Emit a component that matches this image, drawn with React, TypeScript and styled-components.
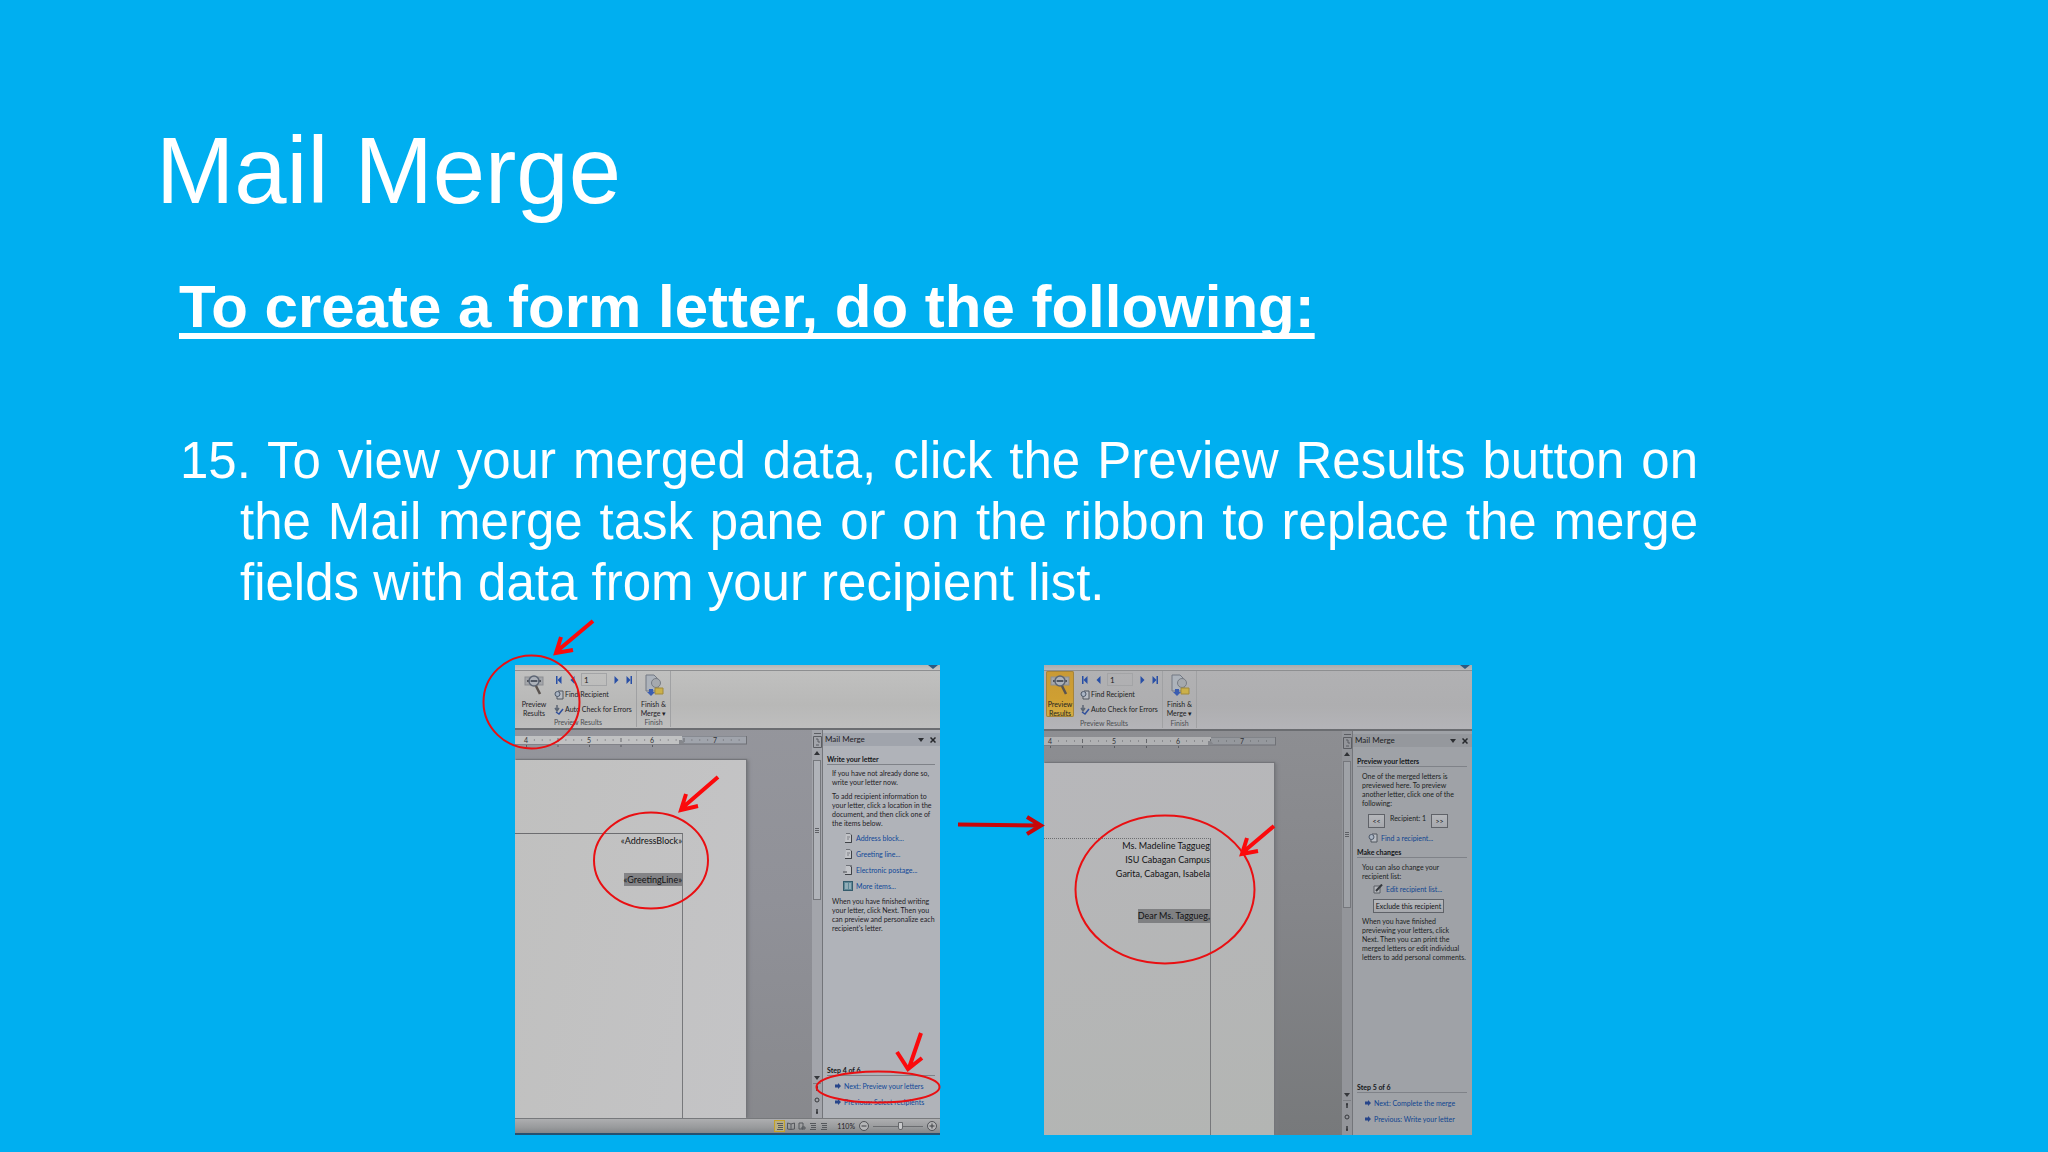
import React from "react";
import styled, { createGlobalStyle, css } from "styled-components";

const Global = createGlobalStyle`
  * { box-sizing: border-box; }
  body { margin: 0; background: #00aff0; }
  h1, h2, h3, p { margin: 0; }
`;

const paneFont = `Lato, "Open Sans", sans-serif`;

type Tone = {
  strip: string; ribbon: string; desk: string; paper: string; pane: string; head: string;
  text: string; link: string; mark: string; track: string;
};

const lightTone: Tone = {
  strip: "linear-gradient(#b4b6b5, #c6c6c6)",
  ribbon: "linear-gradient(#c0c0bf, #b8b8b7 60%, #bebebe)",
  desk: "linear-gradient(#96979d, #909198 50%, #87888c)",
  paper: "linear-gradient(100deg, #c0c0bf, #c4c4c6)",
  pane: "#b0b3b9", head: "#a0a4ac", text: "#1f2126", link: "#0f4798", mark: "#838386", track: "#a3a5ab",
};

const darkTone: Tone = {
  strip: "linear-gradient(#a9abac, #b9b9ba)",
  ribbon: "linear-gradient(#b1b1b3, #aeaeb0 60%, #b4b4b8)",
  desk: "linear-gradient(#909195, #85868a 50%, #77797b)",
  paper: "linear-gradient(170deg, #b7b7ba, #b3b5b3)",
  pane: "#9fa2a7", head: "#95989d", text: "#1c1e22", link: "#0f4490", mark: "#7f8082", track: "#93959a",
};

const Slide = styled.main`
  min-height: 100vh;
  padding: 115px 0 17px;
  background: #00aff0;
  color: #fff;
  font-family: "Liberation Sans", Arial, sans-serif;
`;
const Title = styled.h1`
  padding: 0 156px;
  font-size: 94px;
  line-height: 112px;
  font-weight: 400;
`;
const Heading = styled.h2`
  padding: 44px 179px 0;
  font-size: 60px;
  line-height: 72px;
  font-weight: 700;
  text-decoration: underline;
  text-decoration-thickness: 6px;
  text-underline-offset: 6px;
  text-decoration-skip-ink: none;
`;
const Step = styled.p`
  padding: 87px 350px 0 240px;
  font-size: 51px;
  line-height: 61px;
  text-indent: -60px;
  text-align: justify;
`;
const Figures = styled.section`
  position: relative;
  display: flex;
  gap: 104px;
  width: fit-content;
  margin: 52px 0 0 515px;
`;
const Marks = styled.svg`
  position: absolute;
  inset: 0;
  overflow: visible;
  pointer-events: none;
`;

const Window = styled.article<{ $tone: Tone; $width: number }>`
  display: flex;
  flex-direction: column;
  width: ${p => p.$width}px;
  height: 470px;
  overflow: hidden;
  color: ${p => p.$tone.text};
  background: ${p => p.$tone.desk};
  font-family: ${paneFont};
  font-size: 7px;
  line-height: 9px;
  white-space: nowrap;
`;
const Strip = styled.div<{ $tone: Tone }>`
  display: flex;
  justify-content: flex-end;
  height: 6px;
  padding-right: 2px;
  background: ${p => p.$tone.strip};
  border-bottom: 1px solid #8d8e90;
`;
const Ribbon = styled.div<{ $tone: Tone; $inset: number; $height: number }>`
  display: flex;
  height: ${p => p.$height}px;
  padding-left: ${p => p.$inset}px;
  background: ${p => p.$tone.ribbon};
  border-bottom: 2px solid #6b6d71;
`;
const Group = styled.div<{ $width: number }>`
  display: flex;
  flex-direction: column;
  width: ${p => p.$width}px;
  margin: 0 0 1px;
  border-right: 1px solid #a0a1a3;
`;
const GroupBody = styled.div<{ $center?: boolean }>`
  display: flex;
  flex: 1;
  gap: 6px;
  justify-content: ${p => (p.$center ? "center" : "flex-start")};
`;
const GroupLabel = styled.div`
  color: #4c4e52;
  text-align: center;
`;
const plainButton = css`
  margin: 0;
  padding: 0;
  border: 0;
  background: none;
  color: inherit;
  font: inherit;
`;
const BigButton = styled.button<{ $active?: boolean }>`
  ${plainButton}
  display: flex;
  flex-direction: column;
  align-items: center;
  width: 28px;
  height: 46px;
  padding-top: 3px;
  ${p => p.$active && css`
    background: linear-gradient(#c99a35, #cf9f32 60%, #d6ae44);
    box-shadow: inset 0 0 0 1px #a5843a;
    border-radius: 2px;
  `}
  svg { margin-bottom: 4px; flex: none; }
`;
const Tools = styled.div`
  display: flex;
  flex-direction: column;
  padding-top: 1px;
`;
const NavRow = styled.div`
  display: flex;
  align-items: center;
  justify-content: space-between;
  width: 78px;
  height: 15px;
  padding-left: 2px;
`;
const NavButton = styled.button`
  ${plainButton}
  display: flex;
`;
const RecordBox = styled.input`
  width: 26px;
  height: 13px;
  padding: 0 2px;
  border: 1px solid #a3a4a6;
  background: transparent;
  color: #222;
  font: 8px ${paneFont};
`;
const ToolButton = styled.button`
  ${plainButton}
  display: flex;
  align-items: center;
  gap: 1px;
  height: 15px;
`;

const Work = styled.div`
  display: flex;
  flex: 1;
  min-height: 0;
`;
const Desk = styled.div`
  flex: 1;
  display: flex;
  flex-direction: column;
  min-width: 0;
  padding-top: 6px;
`;
const RulerArt = styled.svg<{ $gap: number }>`
  flex: none;
  margin-bottom: ${p => p.$gap}px;
`;
const Paper = styled.div<{ $tone: Tone; $top: number; $width: number }>`
  flex: 1;
  width: ${p => p.$width}px;
  padding: ${p => p.$top}px 63px 0 0;
  background: ${p => p.$tone.paper};
  box-shadow: 1px -1px 1px #74757a, 3px 0 3px #7b7c80;
`;
const TextArea = styled.div<{ $line: number; $dotted?: boolean }>`
  height: 100%;
  border-top: 1px ${p => (p.$dotted ? "dotted" : "solid")} #6c6d70;
  border-right: 1px solid #77787b;
  color: #121214;
  font-family: Lato, sans-serif;
  font-size: 9px;
  line-height: ${p => p.$line}px;
  text-align: right;
`;
const DocLine = styled.p`
  min-height: 1lh;
`;
const Field = styled.mark<{ $tone: Tone }>`
  display: inline-block;
  background: ${p => p.$tone.mark};
  color: inherit;
`;

const Scroll = styled.div<{ $tone: Tone }>`
  display: flex;
  flex-direction: column;
  align-items: center;
  width: 10px;
  padding-top: 3px;
  background: ${p => p.$tone.track};
  svg { flex: none; }
`;
const Thumb = styled.div<{ $tone: Tone; $height: number }>`
  display: grid;
  place-items: center;
  width: 8px;
  height: ${p => p.$height}px;
  margin-bottom: auto;
  background: ${p => p.$tone.pane};
  border: 1px solid #75777c;
`;

const Pane = styled.aside<{ $tone: Tone; $width: number }>`
  display: flex;
  flex-direction: column;
  width: ${p => p.$width}px;
  padding-top: 3px;
  background: ${p => p.$tone.pane};
  border-left: 1px solid #73757a;
`;
const PaneHead = styled.header<{ $tone: Tone }>`
  display: flex;
  align-items: center;
  height: 13px;
  padding: 0 4px 0 2px;
  gap: 6px;
  background: ${p => p.$tone.head};
  font-size: 8px;
  span { flex: 1; }
`;
const Section = styled.h3<{ $gap: number }>`
  height: 10px;
  margin: ${p => p.$gap}px 5px 0 4px;
  border-bottom: 1px solid #7f8288;
  color: #15171a;
  font-size: 7px;
  line-height: 9px;
  font-weight: 700;
`;
const Para = styled.p<{ $gap: number }>`
  margin: ${p => p.$gap}px 0 0 9px;
`;
const LinkRow = styled.div<{ $indent: number }>`
  display: flex;
  align-items: center;
  gap: 3px;
  height: 16px;
  padding-left: ${p => p.$indent}px;
`;
const Link = styled.a<{ $tone: Tone }>`
  color: ${p => p.$tone.link};
  text-decoration: none;
`;
const Items = styled.div`
  padding: 2px 0 0;
`;
const RecipientRow = styled.div`
  display: flex;
  gap: 5px;
  padding: 6px 0 2px 15px;
`;
const RecipientName = styled.span`
  width: 36px;
  text-align: center;
`;
const PushButton = styled.button<{ $width: number }>`
  width: ${p => p.$width}px;
  height: 14px;
  padding: 0;
  border: 1px solid #5f6268;
  background: linear-gradient(#b5b7bb, #a6a8ad);
  color: #121417;
  font: 7px ${paneFont};
`;
const ExcludeRow = styled.div`
  padding: 2px 0 0 20px;
  line-height: 0;
`;
const StepFoot = styled.footer`
  margin-top: auto;
  padding-bottom: 8px;
`;

const Status = styled.div`
  display: flex;
  align-items: center;
  justify-content: flex-end;
  gap: 4px;
  height: 17px;
  padding-right: 3px;
  background: linear-gradient(#adaeb0, #989a9c 60%, #858789);
  border-top: 1px solid #77797c;
  border-bottom: 2px solid #27506f;
`;
const ViewButton = styled.button<{ $active?: boolean }>`
  ${plainButton}
  display: grid;
  place-items: center;
  width: 11px;
  height: 12px;
  margin-right: -4px;
  ${p => p.$active && css`
    border: 1px solid #c4a228;
    background: #b8ae84;
  `}
`;
const Percent = styled.span`
  padding-left: 8px;
`;
const Zoom = styled.input`
  appearance: none;
  width: 50px;
  height: 10px;
  margin: 0;
  background: linear-gradient(#6b6d70, #6b6d70) center / 100% 1px no-repeat;
  &::-webkit-slider-thumb {
    appearance: none;
    width: 5px;
    height: 8px;
    border: 1px solid #66686b;
    border-radius: 0 0 2px 2px;
    background: #c9cacc;
  }
`;

const PreviewIcon = () => (
  <svg width="20" height="22" viewBox="0 0 20 22" fill="none">
    <rect x="1" y="3" width="18" height="8" fill="#a4a6aa" stroke="#8b8d92" />
    <path d="M3 7h14" stroke="#50535a" strokeWidth="2" />
    <circle cx="10" cy="7" r="5" fill="#b4bac4" fillOpacity=".6" stroke="#5b6473" strokeWidth="1.5" />
    <path d="M7 7h6" stroke="#3d4451" strokeWidth="1.5" />
    <path d="M12 12l4 8" stroke="#5a5450" strokeWidth="2.5" />
  </svg>
);
const FinishIcon = () => (
  <svg width="20" height="22" viewBox="0 0 20 22" fill="none">
    <path d="M2 1h8l4 4v12H2z" fill="#adb3bb" stroke="#737983" />
    <circle cx="12" cy="9" r="4.5" fill="#a5a9ae" stroke="#777c84" />
    <path d="M11 14h8v6h-8z" fill="#cbb04a" stroke="#a08a3c" />
    <path d="M5 15h4v3h2l-4 4-4-4h2z" fill="#3b5db0" />
  </svg>
);
const FindIcon = () => (
  <svg width="10" height="10" viewBox="0 0 10 10" fill="none">
    <path d="M4 1h5v8H3V6" fill="#b9bdc4" stroke="#50565f" />
    <circle cx="3.500" cy="4" r="2.500" fill="#a9b4c3" stroke="#4c5768" />
  </svg>
);
const CheckIcon = () => (
  <svg width="10" height="10" viewBox="0 0 10 10" fill="none">
    <path d="M3 0v5M1 3l2 3 2-3" stroke="#5c6675" strokeWidth="1.500" />
    <path d="M2 7l3 2 4-5" stroke="#2f4f9c" strokeWidth="1.500" />
  </svg>
);
const NavGlyph = ({ back, bar }: { back?: boolean; bar?: boolean }) => (
  <svg width="6" height="8" viewBox="0 0 6 8" fill="#284fa6">
    <path d={back ? "M5.500 0v8L1.500 4z" : "M.5 0v8l4-4z"} />
    {bar && <path d={back ? "M0 0h1.500v8H0z" : "M4.500 0H6v8H4.500z"} />}
  </svg>
);
const PageIcon = ({ kind }: { kind: string }) => (
  <svg width="10" height="10" viewBox="0 0 10 10" fill="none">
    {kind === "more" ? (
      <>
        <rect x=".5" y=".5" width="9" height="9" fill="#5d8796" stroke="#345b6c" />
        <path d="M2 3h3M2 5h3M2 7h3M7 2v6" stroke="#c6d2d8" />
      </>
    ) : (
      <>
        <path d="M3 .5h4l1.500 1.500v7.500H2" fill="#c2c4c8" stroke="#6f7278" />
        <path d="M8.500 2v7.500H2" stroke="#3f4247" />
        {kind === "mail" ? <path d="M0 7h4M7 1h2" stroke="#4a4d53" /> : <path d="M4 4h3M4 6h2" stroke="#7c7f85" />}
      </>
    )}
  </svg>
);
const EditIcon = () => (
  <svg width="10" height="10" viewBox="0 0 10 10" fill="none">
    <path d="M1 2h6v7H1z" fill="#b4b7bc" stroke="#5b5e64" />
    <path d="M3 7l6-6.500" stroke="#35383d" strokeWidth="2" />
  </svg>
);
const StepIcon = () => (
  <svg width="6" height="6" viewBox="0 0 6 6" fill="#27458a">
    <path d="M3 0l3 3-3 3V4.500H0v-3h3z" />
  </svg>
);
const Tri = () => (
  <svg width="6" height="4" viewBox="0 0 6 4" fill="#2d2f33"><path d="M0 0h6L3 4z" /></svg>
);
const Close = () => (
  <svg width="6" height="6" viewBox="0 0 6 6" stroke="#26282c" strokeWidth="1.500"><path d="M.5.5l5 5M5.500.5l-5 5" /></svg>
);
const RulerToggle = () => (
  <svg width="9" height="15" viewBox="0 0 9 15" fill="none" stroke="#5b5d62">
    <path d="M1 .5h7M.5 3.500h8v11h-8zM3 6h2v3h2M3 12h3" />
  </svg>
);
const BrowseIcons = () => (
  <svg width="8" height="44" viewBox="0 0 8 44" fill="none" stroke="#36383c">
    <path d="M1 2h6L4 6z" fill="#36383c" stroke="none" />
    <path d="M0 9.500h8" stroke="#7b7d82" />
    <path d="M4 12v5M3 13.500h2M4 35v5M3 38.500h2" strokeWidth="1.500" />
    <circle cx="4" cy="26" r="2" />
  </svg>
);
const ViewIcon = ({ kind }: { kind: number }) => (
  <svg width="8" height="8" viewBox="0 0 8 8" fill="none" stroke="#55585c">
    {kind === 1 ? <path d="M.5 1l3.500 1 3.500-1v6L4 7.500.5 7zM4 2v5" /> : <path d={kind === 2 ? "M1 1h4v6H1zM4 5h3v2H4z" : "M1 1.500h6M2 3.500h5M2 5.500h5M1 7.500h6"} />}
  </svg>
);
const RoundIcon = ({ plus }: { plus?: boolean }) => (
  <svg width="10" height="10" viewBox="0 0 10 10" fill="#b4b5b7" stroke="#3c3e42">
    <circle cx="5" cy="5" r="4.500" strokeWidth=".8" /><path d={plus ? "M2.500 5h5M5 2.500v5" : "M2.500 5h5"} />
  </svg>
);

const Ruler = ({ first, pitch, gap, tone }: { first: number; pitch: number; gap: number; tone: Tone }) => {
  const ticks = Array.from({ length: 30 }, (_, i) => i).filter(i => i % 8 !== 0 && first + (i * pitch) / 8 < 228);
  return (
    <RulerArt $gap={gap} width="232" height="12" viewBox="0 0 232 12" fontFamily={paneFont} fontSize="7">
      <rect width="231.500" height="8" fill={tone.head} stroke="#6f7176" />
      <rect width="167" height="8" fill={tone === lightTone ? "#c0c1c2" : "#b0b1b3"} />
      {ticks.map(i => {
        const x = first + (i * pitch) / 8;
        return <rect key={i} x={x} y={i % 4 === 0 ? 2 : 3.5} width="1" height={i % 4 === 0 ? 4 : 1} fill="#66686c" />;
      })}
      {[4, 5, 6, 7].map((n, i) => <text key={n} x={first + i * pitch} y="7" textAnchor="middle" fill="#303236">{n}</text>)}
      {[0, 1, 2, 3, 4].map(i => <rect key={i} x={first + (i * pitch) / 2} y="9" width="1" height="2" fill="#5b5d62" />)}
      <path d="M164 4l3 0 3 4h-6z" fill="#85878c" />
    </RulerArt>
  );
};

const RibbonBar = ({ tone, inset, height, active, id }: { tone: Tone; inset: number; height: number; active?: boolean; id: string }) => (
  <>
    <Strip $tone={tone}><svg width="10" height="4" viewBox="0 0 10 4"><path d="M0 0h10L5 4z" fill="#2d5a80" /></svg></Strip>
    <Ribbon $tone={tone} $inset={inset} $height={height}>
      <Group $width={117}>
        <GroupBody>
          <BigButton $active={active}><PreviewIcon />Preview<br />Results</BigButton>
          <Tools>
            <NavRow>
              <NavButton aria-label="First record"><NavGlyph back bar /></NavButton>
              <NavButton aria-label="Previous record"><NavGlyph back /></NavButton>
              <RecordBox id={id} aria-label="Record" defaultValue="1" />
              <NavButton aria-label="Next record"><NavGlyph /></NavButton>
              <NavButton aria-label="Last record"><NavGlyph bar /></NavButton>
            </NavRow>
            <ToolButton><FindIcon />Find Recipient</ToolButton>
            <ToolButton><CheckIcon />Auto Check for Errors</ToolButton>
          </Tools>
        </GroupBody>
        <GroupLabel>Preview Results</GroupLabel>
      </Group>
      <Group $width={34}>
        <GroupBody $center>
          <BigButton><FinishIcon />Finish &amp;<span>Merge ▾</span></BigButton>
        </GroupBody>
        <GroupLabel>Finish</GroupLabel>
      </Group>
    </Ribbon>
  </>
);

const ScrollBar = ({ tone, height }: { tone: Tone; height: number }) => (
  <Scroll $tone={tone}>
    <RulerToggle />
    <svg width="8" height="12" viewBox="0 0 8 12"><path d="M1 7h6L4 3z" fill="#303236" /></svg>
    <Thumb $tone={tone} $height={height}>
      <svg width="4" height="5" viewBox="0 0 4 5" stroke="#5e6065"><path d="M0 .5h4M0 2.500h4M0 4.500h4" /></svg>
    </Thumb>
    <BrowseIcons />
  </Scroll>
);

const PaneTitle = ({ tone }: { tone: Tone }) => (
  <PaneHead $tone={tone}><span>Mail Merge</span><Tri /><Close /></PaneHead>
);

const Foot = ({ tone, title, next, prev }: { tone: Tone; title: string; next: string; prev: string }) => (
  <StepFoot>
    <Section $gap={0}>{title}</Section>
    <Items>
      <LinkRow $indent={12}><StepIcon /><Link href="#next" $tone={tone}>{next}</Link></LinkRow>
      <LinkRow $indent={12}><StepIcon /><Link href="#previous" $tone={tone}>{prev}</Link></LinkRow>
    </Items>
  </StepFoot>
);

const letterItems = [
  ["page", "Address block..."],
  ["page", "Greeting line..."],
  ["mail", "Electronic postage..."],
  ["more", "More items..."],
];

const LetterWindow = () => (
  <Window $tone={lightTone} $width={425}>
    <RibbonBar tone={lightTone} inset={5} height={59} id="record-a" />
    <Work>
      <Desk>
        <Ruler first={11} pitch={63} gap={12} tone={lightTone} />
        <Paper $tone={lightTone} $top={73} $width={231}>
          <TextArea $line={13}>
            <DocLine>«AddressBlock»</DocLine>
            <DocLine />
            <DocLine />
            <DocLine><Field $tone={lightTone}>«GreetingLine»</Field></DocLine>
          </TextArea>
        </Paper>
      </Desk>
      <ScrollBar tone={lightTone} height={140} />
      <Pane $tone={lightTone} $width={118}>
        <PaneTitle tone={lightTone} />
        <Section $gap={9}>Write your letter</Section>
        <Para $gap={4}>If you have not already done so,<br />write your letter now.</Para>
        <Para $gap={5}>To add recipient information to<br />your letter, click a location in the<br />document, and then click one of<br />the items below.</Para>
        <Items>
          {letterItems.map(([kind, label]) => (
            <LinkRow key={label} $indent={20}><PageIcon kind={kind} /><Link href="#item" $tone={lightTone}>{label}</Link></LinkRow>
          ))}
        </Items>
        <Para $gap={3}>When you have finished writing<br />your letter, click Next. Then you<br />can preview and personalize each<br />recipient's letter.</Para>
        <Foot tone={lightTone} title="Step 4 of 6" next="Next: Preview your letters" prev="Previous: Select recipients" />
      </Pane>
    </Work>
    <Status>
      {[0, 1, 2, 3, 4].map(n => <ViewButton key={n} $active={n === 0} aria-label={`View ${n + 1}`}><ViewIcon kind={n} /></ViewButton>)}
      <Percent>110%</Percent>
      <RoundIcon />
      <Zoom type="range" aria-label="Zoom" defaultValue={56} />
      <RoundIcon plus />
    </Status>
  </Window>
);

const PreviewWindow = () => (
  <Window $tone={darkTone} $width={428}>
    <RibbonBar tone={darkTone} inset={2} height={60} active id="record-b" />
    <Work>
      <Desk>
        <Ruler first={6} pitch={64} gap={14} tone={darkTone} />
        <Paper $tone={darkTone} $top={75} $width={230}>
          <TextArea $line={14} $dotted>
            <DocLine>Ms. Madeline Taggueg</DocLine>
            <DocLine>ISU Cabagan Campus</DocLine>
            <DocLine>Garita, Cabagan, Isabela</DocLine>
            <DocLine />
            <DocLine />
            <DocLine><Field $tone={darkTone}>Dear Ms. Taggueg,</Field></DocLine>
          </TextArea>
        </Paper>
      </Desk>
      <ScrollBar tone={darkTone} height={147} />
      <Pane $tone={darkTone} $width={120}>
        <PaneTitle tone={darkTone} />
        <Section $gap={10}>Preview your letters</Section>
        <Para $gap={5}>One of the merged letters is<br />previewed here. To preview<br />another letter, click one of the<br />following:</Para>
        <RecipientRow>
          <PushButton $width={17}>&lt;&lt;</PushButton>
          <RecipientName>Recipient: 1</RecipientName>
          <PushButton $width={17}>&gt;&gt;</PushButton>
        </RecipientRow>
        <LinkRow $indent={15}><FindIcon /><Link href="#find" $tone={darkTone}>Find a recipient...</Link></LinkRow>
        <Section $gap={2}>Make changes</Section>
        <Para $gap={5}>You can also change your<br />recipient list:</Para>
        <LinkRow $indent={20}><EditIcon /><Link href="#edit" $tone={darkTone}>Edit recipient list...</Link></LinkRow>
        <ExcludeRow><PushButton $width={71}>Exclude this recipient</PushButton></ExcludeRow>
        <Para $gap={4}>When you have finished<br />previewing your letters, click<br />Next. Then you can print the<br />merged letters or edit individual<br />letters to add personal comments.</Para>
        <Foot tone={darkTone} title="Step 5 of 6" next="Next: Complete the merge" prev="Previous: Write your letter" />
      </Pane>
    </Work>
  </Window>
);

const Annotations = () => (
  <Marks width="956" height="470" viewBox="0 0 956 470" fill="none" stroke="#e90f12" strokeWidth="2">
    <ellipse cx="16.500" cy="37" rx="48" ry="46.500" />
    <ellipse cx="136" cy="195.500" rx="57" ry="48" />
    <ellipse cx="363" cy="422" rx="61.500" ry="15.500" />
    <ellipse cx="650" cy="224.500" rx="89.500" ry="74" />
    <g stroke="#fb0a0c" strokeWidth="4">
      <path d="M78-44L41-13M46-28L41-12L58-15" />
      <path d="M203 112L166 144M171 129L166 145L183 141" />
      <path d="M406 368L394 403M382 387L393 404L407 393" />
      <path d="M759 161L727 188M732 173L727 189L743 186" />
    </g>
    <path d="M443 159.500L524 160.500M512 152L526 160.500L512 169" stroke="#c8060a" strokeWidth="4" />
  </Marks>
);

export default function App() {
  return (
    <>
      <Global />
      <Slide>
        <Title>Mail Merge</Title>
        <Heading>To create a form letter, do the following:</Heading>
        <Step>
          15. To view your merged data, click the Preview Results button on the Mail merge task pane or on the ribbon to
          replace the merge fields with data from your recipient list.
        </Step>
        <Figures>
          <LetterWindow />
          <PreviewWindow />
          <Annotations />
        </Figures>
      </Slide>
    </>
  );
}
